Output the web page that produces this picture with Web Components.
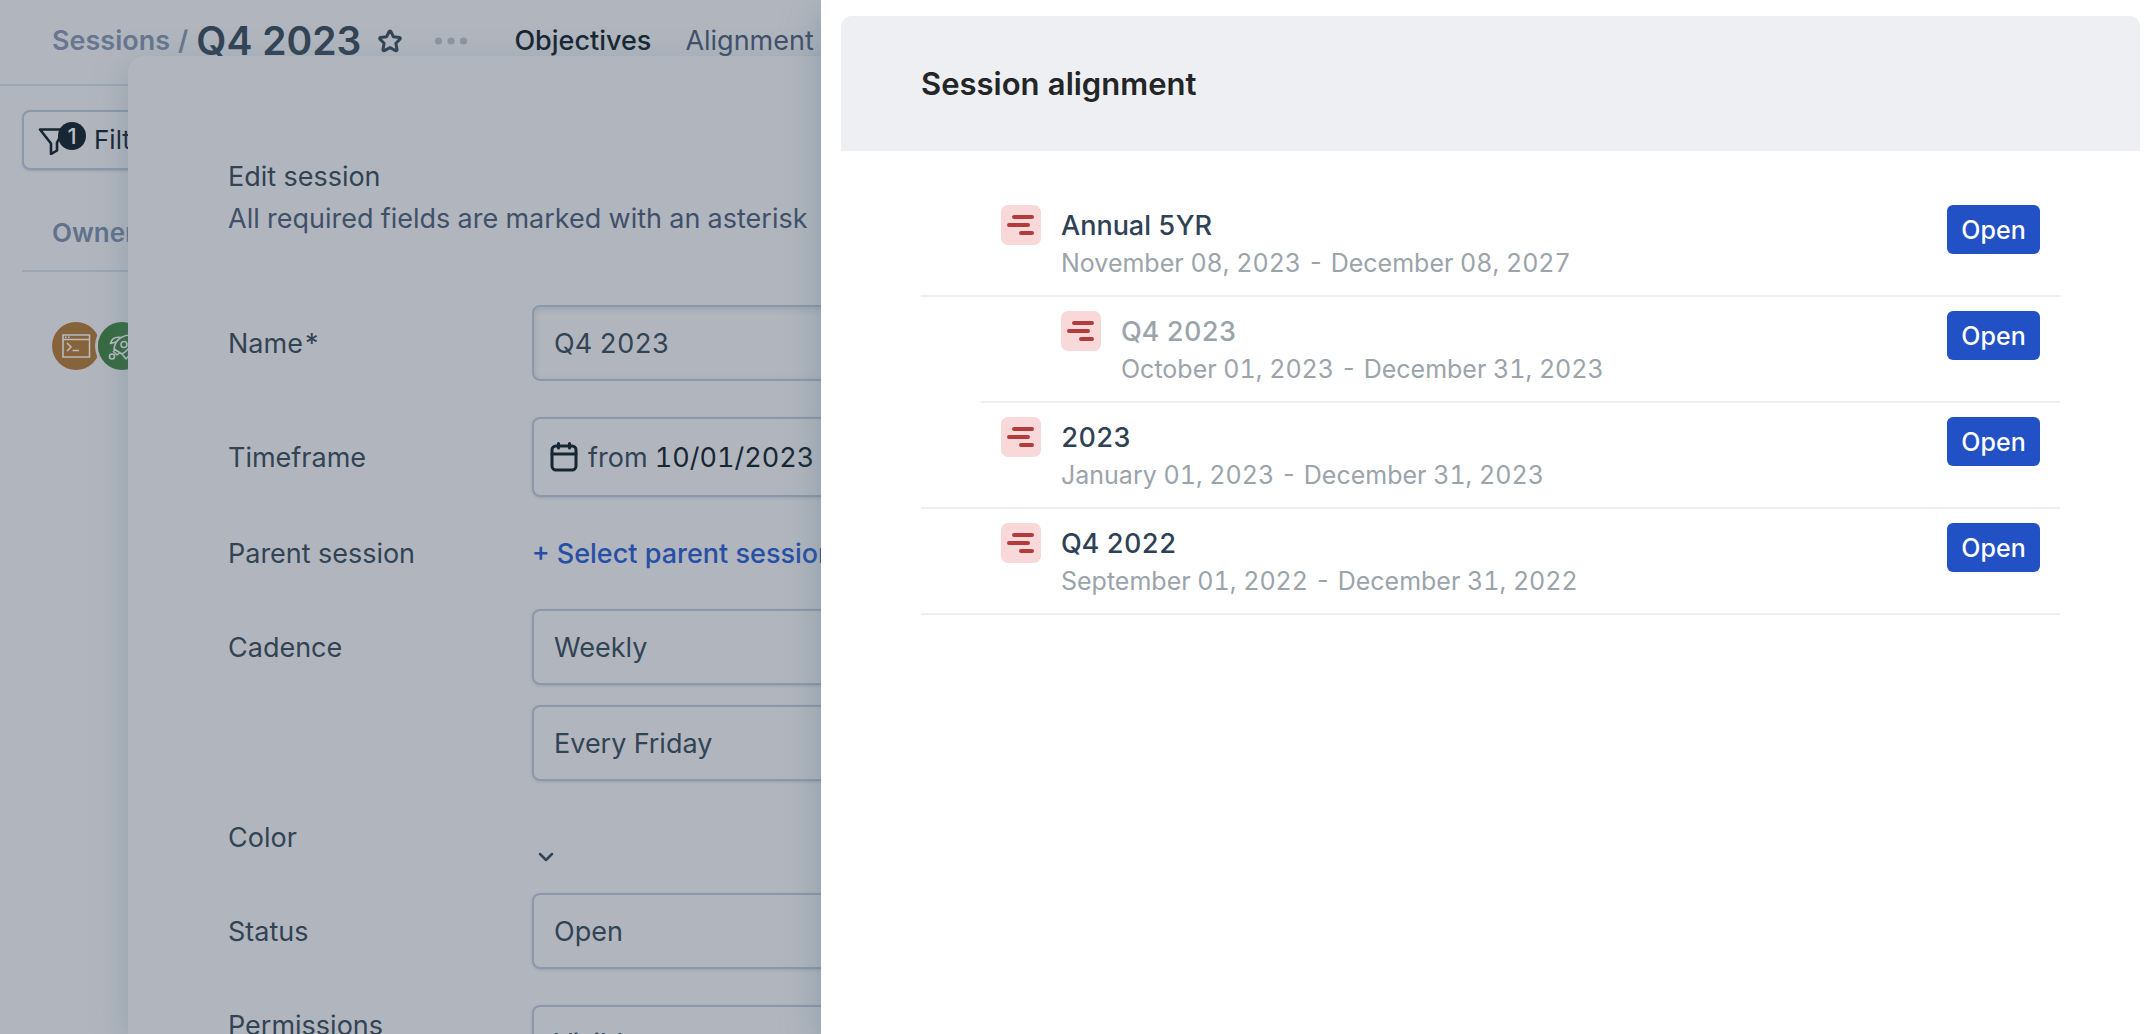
<!DOCTYPE html>
<html lang="en">
<head>
<meta charset="utf-8">
<title>Q4 2023 – Session alignment</title>
<style>
:root{
  --dim:#b1b6be; --ink:#324354; --ink-strong:#172632; --muted:#68778f; --slate:#415069;
  --field:#8b98ab; --rule:#9aa6b4; --link:#274fa6;
}
html,body{height:100%}
body{margin:0;overflow:hidden;background:var(--dim);color:var(--ink);font:400 27px/40px Inter,"Liberation Sans",sans-serif;font-variant-numeric:tabular-nums}
</style>
</head>
<body>
<app-shell>
  <session-header></session-header>
  <owner-table></owner-table>
  <edit-panel slot="panel"></edit-panel>
  <side-drawer slot="drawer" heading="Session alignment">
    <session-row name="Annual 5YR" dates="November 08, 2023 - December 08, 2027"></session-row>
    <session-row name="Q4 2023" dates="October 01, 2023 - December 31, 2023" nested></session-row>
    <session-row name="2023" dates="January 01, 2023 - December 31, 2023"></session-row>
    <session-row name="Q4 2022" dates="September 01, 2022 - December 31, 2022"></session-row>
  </side-drawer>
</app-shell>
<script>
const define = (name, html, setup) => customElements.define(name, class extends HTMLElement {
  connectedCallback() {
    if (this.shadowRoot) return;
    const t = document.createElement('template');
    t.innerHTML = html;
    this.attachShadow({mode: 'open'}).append(t.content.cloneNode(true));
    if (setup) setup(this, this.shadowRoot);
  }
});

define('app-shell', `
<style>
:host{display:block;position:relative;height:100vh;overflow:hidden}
main{display:flex;flex-direction:column}
.panel{position:absolute;top:56px;left:128px;right:0;bottom:0;z-index:1}
.drawer{position:absolute;top:0;left:821px;right:0;bottom:0;z-index:2}
</style>
<main><slot></slot></main>
<div class="panel"><slot name="panel"></slot></div>
<div class="drawer"><slot name="drawer"></slot></div>`);

define('session-header', `
<style>
:host{display:block;border-bottom:2px solid var(--rule)}
header{display:flex;align-items:center;height:82px;padding:0 52px 2px;white-space:nowrap}
a{color:inherit;text-decoration:none}
.crumb{color:var(--muted);font-weight:600;display:flex;gap:8px}
h1{margin:0 0 0 8px;font-size:39px;line-height:48px;font-weight:600;font-variant-numeric:normal}
button{display:flex;border:0;padding:0;background:none;color:var(--ink)}
.star{margin-left:16px}
.more{margin-left:31px;color:#8d959f}
nav{display:flex;gap:34px;margin-left:46px}
nav a{color:var(--slate)}
nav a[aria-current]{color:var(--ink-strong);font-weight:500}
</style>
<header>
  <div class="crumb"><a href="#sessions">Sessions</a><span>/</span></div>
  <h1>Q4 2023</h1>
  <button class="star" aria-label="Add to favourites"><svg width="26" height="26" viewBox="0 0 26 26" fill="none" stroke="currentColor" stroke-width="3" stroke-linejoin="round"><path d="M13 3Q13.700 3 14 3.700L16.300 8.700L22.300 9.500Q24 9.900 22.900 11.200L18.900 15.200L20 21.500Q20.200 23.200 18.600 22.600L13 19.700L7.400 22.600Q5.800 23.200 6 21.500L7.100 15.200L3.100 11.200Q2 9.900 3.700 9.500L9.700 8.700L12 3.700Q12.300 3 13 3Z"/></svg></button>
  <button class="more" aria-label="More actions"><svg width="34" height="8" viewBox="0 0 34 8" fill="currentColor"><circle cx="4.500" cy="4" r="3.600"/><circle cx="17" cy="4" r="3.600"/><circle cx="29.500" cy="4" r="3.600"/></svg></button>
  <nav><a href="#objectives" aria-current="page">Objectives</a><a href="#alignment">Alignment</a></nav>
</header>`);

define('owner-table', `
<style>
:host{display:block;padding:24px 22px}
.filter{position:relative;display:flex;align-items:center;gap:26px;box-sizing:border-box;width:140px;height:60px;padding:0 14px;border:2px solid var(--field);border-radius:8px;background:none;color:var(--ink-strong);font:400 26px/36px Inter,"Liberation Sans",sans-serif;box-shadow:0 1px 2px rgba(40,60,90,.2)}
.filter svg{flex:none}
.badge{position:absolute;left:34px;top:10px;width:28px;height:28px;border-radius:50%;background:var(--ink-strong);color:#b9bec6;font-size:22px;line-height:28px;font-weight:500;text-align:center}
table{width:100%;margin-top:42px;border-collapse:collapse}
th{height:58px;padding:0 30px;border-bottom:2px solid var(--rule);text-align:left;vertical-align:top;color:#61718b;font-size:26px;line-height:42px;font-weight:600}
td{padding:50px 30px 0}
.owners{display:flex}
.owners svg{border-radius:50%}
.owners svg+svg{margin-left:-2px;box-shadow:0 0 0 3px var(--dim)}
</style>
<button class="filter"><svg width="30" height="30" viewBox="0 0 30 30" fill="none" stroke="currentColor" stroke-width="2.600" stroke-linejoin="round"><path d="M2 4.500H26L19 17.500V25.500L13 29V18.500Z"/></svg><span class="badge">1</span><span>Filter</span></button>
<table>
  <thead><tr><th>Owner</th></tr></thead>
  <tbody><tr><td><div class="owners">
    <svg width="48" height="48" viewBox="0 0 48 48" fill="none" stroke="#b7bbc0" stroke-width="1.600"><rect width="48" height="48" fill="#87633b" stroke="none"/><path d="M11 13H37.500V35H11ZM11 17.500H37.500M13 15.200H14.500M16 15.200H17.500M15 21L19 25L15 29M20.500 28.500H27"/></svg>
    <svg width="48" height="48" viewBox="0 0 48 48" fill="none" stroke="#b7bbc0" stroke-width="1.600" stroke-linejoin="round"><rect width="48" height="48" fill="#376a40" stroke="none"/><path d="M16 27Q17 19 23 15.500Q28 12.500 35 13Q35 21 31 26Q28 30 24 32ZM18 20L12.500 21.500Q14 14 23 15.500M24 32L28 37Q33 33 31 26M18 27L15.500 29.500L19 33L22 30.500"/><circle cx="26" cy="22.500" r="3"/><circle cx="14" cy="34.500" r="2.500"/></svg>
  </div></td></tr></tbody>
</table>`);

define('form-row', `
<style>
:host{display:grid;grid-template-columns:304px 1fr;align-items:start;min-height:40px}
.label{margin-bottom:-2px;line-height:42px}
:host([tall]) .label{line-height:78px}
:host([taller]) .label{line-height:82px}
.controls{display:flex;flex-direction:column;gap:20px}
</style>
<div class="label"><slot name="label"></slot></div>
<div class="controls"><slot></slot></div>`);

define('edit-panel', `
<style>
:host{display:block;box-sizing:border-box;height:100%;overflow:hidden;padding:101px 100px 0;border-radius:16px 0 0 0;background:var(--dim);box-shadow:0 10px 36px rgba(90,120,140,.35)}
h2,p{margin:0;font-size:27px;line-height:40px;font-weight:400;white-space:nowrap}
p{margin-top:2px;color:var(--slate)}
form{display:flex;flex-direction:column;gap:36px;margin-top:66px}
input,select,.date{box-sizing:border-box;width:100%;height:76px;margin:0;padding:2px 20px 0;border:2px solid var(--field);border-radius:8px;background:transparent;color:var(--ink);font:inherit;font-variant-numeric:tabular-nums;appearance:none;outline:0;box-shadow:0 1px 3px rgba(60,80,110,.2)}
input{padding-top:0;box-shadow:inset 0 2px 6px rgba(60,80,110,.2)}
.date{display:flex;align-items:center;gap:10px;height:80px;padding:0 16px;text-align:left}
.date span{padding-top:2px}
.date b{color:var(--ink-strong);font-weight:400}
.date svg{color:var(--ink-strong)}
a{color:var(--link);line-height:42px;margin-bottom:-2px;font-weight:500;text-decoration:none;white-space:nowrap}
.swatch{display:flex;align-self:flex-start;padding:34px 6px 0;height:50px;margin-bottom:-10px;border:0;background:none;color:var(--ink)}
</style>
<h2>Edit session</h2>
<p>All required fields are marked with an asterisk</p>
<form>
  <form-row tall><label slot="label" for="name">Name*</label><input id="name" value="Q4 2023"></form-row>
  <form-row taller><label slot="label" for="time">Timeframe</label>
    <button type="button" class="date" id="time"><svg width="28" height="32" viewBox="0 0 28 32" fill="none" stroke="currentColor" stroke-width="3" stroke-linecap="round"><rect x="2" y="5" width="24" height="24" rx="4"/><path d="M2 13H26M8.500 2.500V7M19.500 2.500V7"/></svg><span>from <b>10/01/2023</b></span></button></form-row>
  <form-row><span slot="label">Parent session</span><a href="#parent">+ Select parent session</a></form-row>
  <form-row tall><label slot="label" for="cadence">Cadence</label>
    <select id="cadence"><option>Weekly</option></select>
    <select aria-label="Check-in day"><option>Every Friday</option></select></form-row>
  <form-row><label slot="label" for="color">Color</label>
    <button type="button" class="swatch" id="color" aria-label="Choose color"><svg width="16" height="12" viewBox="0 0 16 12" fill="none" stroke="currentColor" stroke-width="2.500" stroke-linecap="round" stroke-linejoin="round"><path d="M2 3L8 9L14 3"/></svg></button></form-row>
  <form-row tall><label slot="label" for="status">Status</label><select id="status"><option>Open</option></select></form-row>
  <form-row><label slot="label" for="perm">Permissions</label><select id="perm"><option>Visible</option></select></form-row>
</form>`);

define('side-drawer', `
<style>
:host{display:block;box-sizing:border-box;height:100%;padding:16px 10px 16px 20px;background:#fff;box-shadow:0 10px 36px rgba(80,115,135,.4)}
header{padding:48px 80px 47px;border-radius:10px 10px 0 0;background:#edeff3}
h2{margin:0;color:#232527;font-size:31px;line-height:40px;font-weight:600}
.list{margin:40px 80px 0}
</style>
<header><h2></h2></header>
<div class="list" role="list"><slot></slot></div>`,
(el, root) => root.querySelector('h2').textContent = el.getAttribute('heading'));

define('session-row', `
<style>
:host{display:flex;align-items:flex-start;gap:20px;box-sizing:border-box;height:106px;padding:14px 20px 0 80px;border-bottom:2px solid #edeff3}
:host([nested]){margin-left:60px}
svg{flex:none}
.text{flex:1;min-width:0}
.name{color:#2f4154;line-height:42px;font-weight:500}
.dates{color:#9ba3ab;font-size:25px;line-height:32px}
:host([nested]) .name{color:#9ba3ab}
button{width:93px;height:49px;padding:0;border:0;border-radius:6px;background:#2251c5;color:#fff;font:500 25px/40px Inter,"Liberation Sans",sans-serif}
</style>
<svg width="40" height="40" viewBox="0 0 40 40" stroke="#b23c3c" stroke-width="4" stroke-linecap="round"><rect width="40" height="40" rx="7" fill="#f9d8da" stroke="none"/><path d="M13 12H31M8 20H27M20 28H31"/></svg>
<div class="text"><div class="name"></div><div class="dates"></div></div>
<button>Open</button>`,
(el, root) => {
  el.setAttribute('role', 'listitem');
  root.querySelector('.name').textContent = el.getAttribute('name');
  root.querySelector('.dates').textContent = el.getAttribute('dates');
});
</script>
</body>
</html>
